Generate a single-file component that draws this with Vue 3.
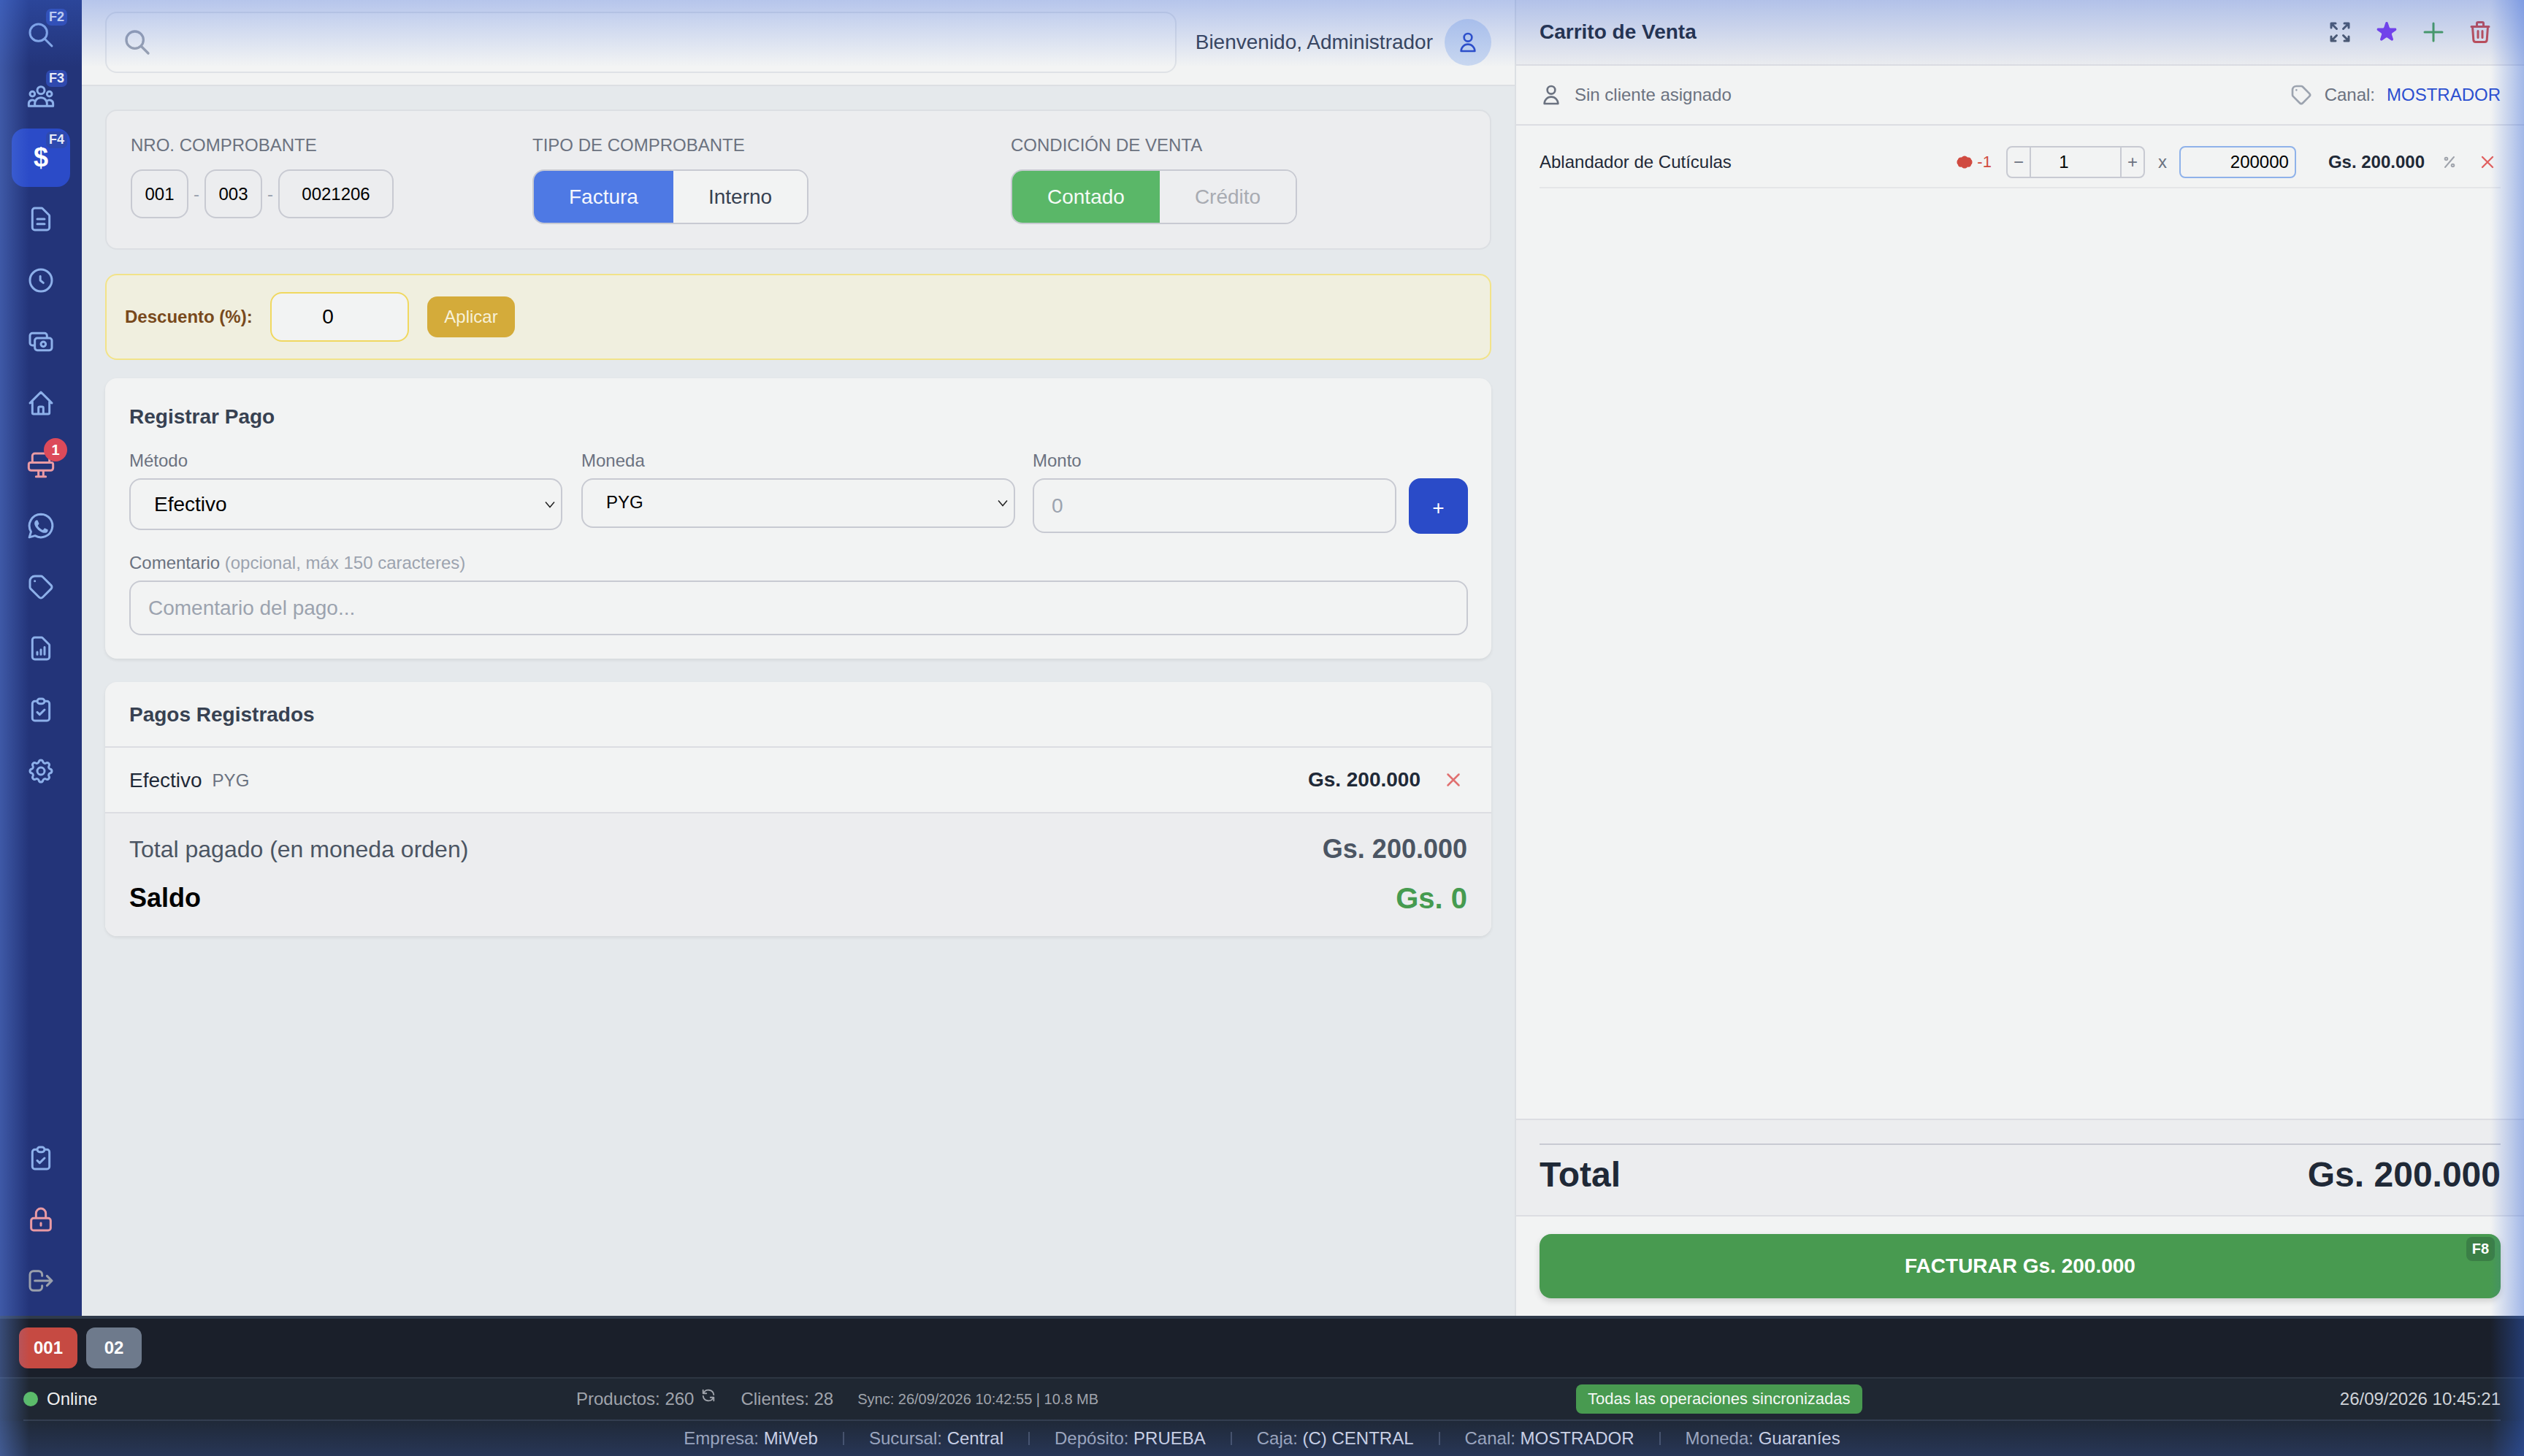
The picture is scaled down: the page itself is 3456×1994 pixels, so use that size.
<script setup>
const topItems = [
  { key: 'search', badge: 'F2', d: 'M21 21l-6-6m2-5a7 7 0 11-14 0 7 7 0 0114 0z' },
  { key: 'clients', badge: 'F3', d: 'M17 20h5v-2a3 3 0 00-5.356-1.857M17 20H7m10 0v-2c0-.656-.126-1.283-.356-1.857M7 20H2v-2a3 3 0 015.356-1.857M7 20v-2c0-.656.126-1.283.356-1.857m0 0a5.002 5.002 0 019.288 0M15 7a3 3 0 11-6 0 3 3 0 016 0zm6 3a2 2 0 11-4 0 2 2 0 014 0zM7 10a2 2 0 11-4 0 2 2 0 014 0z' },
  { key: 'sale', badge: 'F4', glyph: '$', active: true },
  { key: 'docs', d: 'M9 12h6m-6 4h6m2 5H7a2 2 0 01-2-2V5a2 2 0 012-2h5.586a1 1 0 01.707.293l5.414 5.414a1 1 0 01.293.707V19a2 2 0 01-2 2z' },
  { key: 'history', d: 'M11.5 8.5v3.5l2.5 2m7-2a9 9 0 11-18 0 9 9 0 0118 0z' },
  { key: 'cash', d: 'M17 9V7a2 2 0 00-2-2H5a2 2 0 00-2 2v6a2 2 0 002 2h2m2 4h10a2 2 0 002-2v-6a2 2 0 00-2-2H9a2 2 0 00-2 2v6a2 2 0 002 2zm7-5a2 2 0 11-4 0 2 2 0 014 0z' },
  { key: 'home', d: 'M3 12l2-2m0 0l7-7 7 7M5 10v10a1 1 0 001 1h3m10-11l2 2m-2-2v10a1 1 0 01-1 1h-3m-6 0a1 1 0 001-1v-4a1 1 0 011-1h2a1 1 0 011 1v4a1 1 0 001 1m-6 0h6' },
  { key: 'pos', tone: 'pink', count: '1', d: 'M5 10.5V5a2 2 0 012-2h10a2 2 0 012 2v5.500M3.500 10.500h17A1.500 1.500 0 0122 12v3a2 2 0 01-2 2H4a2 2 0 01-2-2v-3a1.500 1.500 0 011.500-1.500zM10 17.500v4M14 17.500v4M8 22h8' },
  { key: 'whatsapp', d: 'M12 2.500a9.500 9.500 0 00-8.100 14.400L2.500 21.500l4.700-1.300A9.500 9.500 0 1012 2.500z', fill: 'M8.600 7.400c-.3 0-.7.1-1 .5-.4.4-.9 1-.9 2.300s1 2.700 1.100 2.900c.1.2 1.900 3 4.700 4.100 2.300.9 2.800.7 3.300.7s1.600-.7 1.800-1.300c.2-.6.2-1.200.2-1.300-.1-.1-.3-.2-.5-.3l-1.900-.9c-.3-.1-.5-.2-.6.1l-.9 1.100c-.2.2-.3.2-.6.1-.3-.1-1.200-.4-2.200-1.400-.8-.7-1.400-1.600-1.500-1.900-.2-.3 0-.4.1-.6l.4-.5c.1-.2.2-.3.3-.5.1-.2 0-.4 0-.5l-.9-2c-.2-.5-.4-.5-.6-.5z' },
  { key: 'tags', d: 'M7 7h.01M7 3h5c.512 0 1.024.195 1.414.586l7 7a2 2 0 010 2.828l-7 7a2 2 0 01-2.828 0l-7-7A1.994 1.994 0 013 12V7a4 4 0 014-4z' },
  { key: 'reports', d: 'M9 17v-2m3 2v-4m3 4v-6m2 10H7a2 2 0 01-2-2V5a2 2 0 012-2h5.586a1 1 0 01.707.293l5.414 5.414a1 1 0 01.293.707V19a2 2 0 01-2 2z' },
  { key: 'tasks', d: 'M9 5H7a2 2 0 00-2 2v12a2 2 0 002 2h10a2 2 0 002-2V7a2 2 0 00-2-2h-2M9 5a2 2 0 002 2h2a2 2 0 002-2M9 5a2 2 0 012-2h2a2 2 0 012 2m-6 9l2 2 4-4' },
  { key: 'settings', d: 'M10.325 4.317c.426-1.756 2.924-1.756 3.35 0a1.724 1.724 0 002.573 1.066c1.543-.94 3.31.826 2.37 2.37a1.724 1.724 0 001.065 2.572c1.756.426 1.756 2.924 0 3.35a1.724 1.724 0 00-1.066 2.573c.94 1.543-.826 3.31-2.37 2.37a1.724 1.724 0 00-2.572 1.065c-.426 1.756-2.924 1.756-3.35 0a1.724 1.724 0 00-2.573-1.066c-1.543.94-3.31-.826-2.37-2.37a1.724 1.724 0 00-1.065-2.572c-1.756-.426-1.756-2.924 0-3.35a1.724 1.724 0 001.066-2.573c-.94-1.543.826-3.31 2.37-2.37.996.608 2.296.07 2.572-1.065zM15 12a3 3 0 11-6 0 3 3 0 016 0z' },
];

const bottomItems = [
  { key: 'tasks2', d: 'M9 5H7a2 2 0 00-2 2v12a2 2 0 002 2h10a2 2 0 002-2V7a2 2 0 00-2-2h-2M9 5a2 2 0 002 2h2a2 2 0 002-2M9 5a2 2 0 012-2h2a2 2 0 012 2m-6 9l2 2 4-4' },
  { key: 'lock', tone: 'pink', d: 'M12 15v2m-6 4h12a2 2 0 002-2v-6a2 2 0 00-2-2H6a2 2 0 00-2 2v6a2 2 0 002 2zm10-10V7a4 4 0 00-8 0v4h8z' },
  { key: 'logout', tone: 'grey', d: 'M17 16l4-4m0 0l-4-4m4 4H7m6 4v1a3 3 0 01-3 3H6a3 3 0 01-3-3V7a3 3 0 013-3h4a3 3 0 013 3v1' },
];

const userPath = 'M16 7a4 4 0 11-8 0 4 4 0 018 0zM12 14a7 7 0 00-7 7h14a7 7 0 00-7-7z';
const closePath = 'M6 18L18 6M6 6l12 12';

const infoItems = [
  { label: 'Empresa:', value: 'MiWeb' },
  { label: 'Sucursal:', value: 'Central' },
  { label: 'Depósito:', value: 'PRUEBA' },
  { label: 'Caja:', value: '(C) CENTRAL' },
  { label: 'Canal:', value: 'MOSTRADOR' },
  { label: 'Moneda:', value: 'Guaraníes' },
];
</script>

<template>
  <div class="page">
    <div class="workspace">
      <aside class="sidebar">
        <nav class="side-group">
          <div
            v-for="item in topItems"
            :key="item.key"
            class="side-item"
            :class="[item.tone, { active: item.active }]"
          >
            <span v-if="item.glyph" class="side-glyph">{{ item.glyph }}</span>
            <svg v-else class="side-icon" viewBox="0 0 24 24" fill="none" stroke="currentColor" stroke-width="1.8" stroke-linecap="round" stroke-linejoin="round">
              <path :d="item.d" />
              <path v-if="item.fill" :d="item.fill" fill="currentColor" stroke="none" />
            </svg>
            <span v-if="item.badge" class="side-badge">{{ item.badge }}</span>
            <span v-if="item.count" class="side-count">{{ item.count }}</span>
          </div>
        </nav>
        <nav class="side-group">
          <div v-for="item in bottomItems" :key="item.key" class="side-item" :class="item.tone">
            <svg class="side-icon" viewBox="0 0 24 24" fill="none" stroke="currentColor" stroke-width="1.8" stroke-linecap="round" stroke-linejoin="round">
              <path :d="item.d" />
            </svg>
          </div>
        </nav>
      </aside>

      <main class="main">
        <header class="topbar">
          <div class="searchbox">
            <svg class="search-icon" viewBox="0 0 24 24" fill="none" stroke="currentColor" stroke-width="2" stroke-linecap="round" stroke-linejoin="round">
              <path d="M21 21l-6-6m2-5a7 7 0 11-14 0 7 7 0 0114 0z" />
            </svg>
            <input class="search-input" type="text" />
          </div>
          <span class="welcome">Bienvenido, Administrador</span>
          <div class="avatar">
            <svg viewBox="0 0 24 24" fill="none" stroke="currentColor" stroke-width="2" stroke-linecap="round" stroke-linejoin="round">
              <path :d="userPath" />
            </svg>
          </div>
        </header>

        <div class="content">
          <section class="card-voucher">
            <div>
              <div class="voucher-label">NRO. COMPROBANTE</div>
              <div class="voucher-number">
                <input class="num-input w-short" value="001" />
                <span class="num-dash">-</span>
                <input class="num-input w-short" value="003" />
                <span class="num-dash">-</span>
                <input class="num-input w-long" value="0021206" />
              </div>
            </div>
            <div>
              <div class="voucher-label">TIPO DE COMPROBANTE</div>
              <div class="segment">
                <button class="seg-btn seg-blue">Factura</button>
                <button class="seg-btn seg-plain">Interno</button>
              </div>
            </div>
            <div>
              <div class="voucher-label">CONDICIÓN DE VENTA</div>
              <div class="segment">
                <button class="seg-btn seg-green">Contado</button>
                <button class="seg-btn seg-muted">Crédito</button>
              </div>
            </div>
          </section>

          <section class="card-discount">
            <label class="discount-label">Descuento (%):</label>
            <input class="discount-input" value="0" />
            <button class="discount-btn">Aplicar</button>
          </section>

          <section class="card-pay">
            <h3 class="card-title">Registrar Pago</h3>
            <div class="pay-row">
              <div class="col-method">
                <label class="field-label">Método</label>
                <div class="select-wrap tall">
                  <select class="select select-big"><option>Efectivo</option></select>
                  <svg class="chevron" viewBox="0 0 14 10" fill="none" stroke="#222" stroke-width="1.5"><path d="M1 1.500l6 7 6-7" /></svg>
                </div>
              </div>
              <div class="col-currency">
                <label class="field-label">Moneda</label>
                <div class="select-wrap">
                  <select class="select select-small"><option>PYG</option></select>
                  <svg class="chevron" viewBox="0 0 14 10" fill="none" stroke="#222" stroke-width="1.5"><path d="M1 1.500l6 7 6-7" /></svg>
                </div>
              </div>
              <div class="col-amount">
                <label class="field-label">Monto</label>
                <input class="text-field" placeholder="0" />
              </div>
              <button class="add-btn">+</button>
            </div>
            <label class="field-label comment-label">Comentario <span class="hint">(opcional, máx 150 caracteres)</span></label>
            <input class="text-field comment-field" placeholder="Comentario del pago..." />
          </section>

          <section class="card-list">
            <h3 class="list-title">Pagos Registrados</h3>
            <div class="list-row">
              <span class="row-method">Efectivo</span>
              <span class="row-currency">PYG</span>
              <span class="row-amount">Gs. 200.000</span>
              <svg class="row-close" viewBox="0 0 24 24" fill="none" stroke="currentColor" stroke-width="2" stroke-linecap="round">
                <path :d="closePath" />
              </svg>
            </div>
            <div class="list-footer">
              <div class="sum-row">
                <span class="sum-label">Total pagado (en moneda orden)</span>
                <span class="sum-value">Gs. 200.000</span>
              </div>
              <div class="sum-row balance-row">
                <span class="balance-label">Saldo</span>
                <span class="balance-value">Gs. 0</span>
              </div>
            </div>
          </section>
        </div>
      </main>

      <aside class="cart">
        <header class="cart-head">
          <h2 class="cart-title">Carrito de Venta</h2>
          <div class="cart-tools">
            <svg class="tool tool-grey" viewBox="0 0 24 24" fill="none" stroke="currentColor" stroke-width="2" stroke-linecap="round" stroke-linejoin="round">
              <path d="M4 8V4m0 0h4M4 4l5 5m11-1V4m0 0h-4m4 0l-5 5M4 16v4m0 0h4m-4 0l5-5m11 1v4m0 0h-4m4 0l-5-5" />
            </svg>
            <svg class="tool tool-purple" viewBox="0 0 20 20" fill="currentColor">
              <path d="M9.049 2.927c.3-.921 1.603-.921 1.902 0l1.070 3.292a1 1 0 00.950.690h3.462c.969 0 1.371 1.240.588 1.810l-2.800 2.034a1 1 0 00-.364 1.118l1.070 3.292c.3.921-.755 1.688-1.540 1.118l-2.800-2.034a1 1 0 00-1.175 0l-2.800 2.034c-.784.570-1.838-.197-1.539-1.118l1.070-3.292a1 1 0 00-.364-1.118L2.980 8.720c-.783-.570-.380-1.810.588-1.810h3.461a1 1 0 00.951-.690l1.070-3.292z" />
            </svg>
            <svg class="tool tool-green" viewBox="0 0 24 24" fill="none" stroke="currentColor" stroke-width="2" stroke-linecap="round">
              <path d="M12 4v16m8-8H4" />
            </svg>
            <svg class="tool tool-red" viewBox="0 0 24 24" fill="none" stroke="currentColor" stroke-width="2" stroke-linecap="round" stroke-linejoin="round">
              <path d="M19 7l-.867 12.142A2 2 0 0116.138 21H7.862a2 2 0 01-1.995-1.858L5 7m5 4v6m4-6v6m1-10V4a1 1 0 00-1-1h-4a1 1 0 00-1 1v3M4 7h16" />
            </svg>
          </div>
        </header>

        <div class="cart-client">
          <svg class="client-icon" viewBox="0 0 24 24" fill="none" stroke="currentColor" stroke-width="2" stroke-linecap="round" stroke-linejoin="round">
            <path :d="userPath" />
          </svg>
          <span class="client-name">Sin cliente asignado</span>
          <svg class="client-icon tag-icon" viewBox="0 0 24 24" fill="none" stroke="currentColor" stroke-width="2" stroke-linecap="round" stroke-linejoin="round">
            <path d="M7 7h.01M7 3h5c.512 0 1.024.195 1.414.586l7 7a2 2 0 010 2.828l-7 7a2 2 0 01-2.828 0l-7-7A1.994 1.994 0 013 12V7a4 4 0 014-4z" />
          </svg>
          <span class="channel">Canal:</span>
          <span class="channel-value">MOSTRADOR</span>
        </div>

        <div class="cart-list">
          <div class="cart-item">
            <span class="item-name">Ablandador de Cutículas</span>
            <svg class="stock-icon" viewBox="0 0 24 18" fill="currentColor" preserveAspectRatio="none">
              <path d="M12 .5c2 0 3 1 4 2 3-.5 5 1 5 3 2 1 2 6 0 7 0 2-2 4-5 3-1 1.500-2 2-4 2s-3-.5-4-2c-3 1-5-1-5-3-2-1-2-6 0-7 0-2 2-3.500 5-3 1-1 2-2 4-2z" />
            </svg>
            <span class="stock-count">-1</span>
            <div class="qty">
              <span class="qty-btn qty-minus">−</span>
              <input class="qty-input" value="1" />
              <span class="qty-btn qty-plus">+</span>
            </div>
            <span class="times">x</span>
            <input class="price-input" value="200000" />
            <span class="item-amount">Gs. 200.000</span>
            <svg class="item-percent" viewBox="0 0 24 24" fill="none" stroke="currentColor" stroke-width="2" stroke-linecap="round">
              <path d="M18 5L6 19" />
              <circle cx="7.500" cy="7.500" r="1.800" />
              <circle cx="16.500" cy="16.500" r="1.800" />
            </svg>
            <svg class="item-close" viewBox="0 0 24 24" fill="none" stroke="currentColor" stroke-width="2" stroke-linecap="round">
              <path :d="closePath" />
            </svg>
          </div>
        </div>

        <div class="cart-total">
          <div class="total-inner">
            <span>Total</span>
            <span>Gs. 200.000</span>
          </div>
        </div>
        <div class="cart-action">
          <button class="invoice-btn">
            FACTURAR Gs. 200.000
            <span class="invoice-key">F8</span>
          </button>
        </div>
      </aside>
    </div>

    <footer class="statusbar">
      <div class="tabs">
        <span class="tab tab-red">001</span>
        <span class="tab tab-grey">02</span>
      </div>
      <div class="status-row">
        <div class="online"><span class="online-dot"></span>Online</div>
        <div class="counts">
          <span>Productos: 260</span>
          <svg class="refresh" viewBox="0 0 24 24" fill="none" stroke="currentColor" stroke-width="2" stroke-linecap="round" stroke-linejoin="round">
            <path d="M4 4v5h.582m15.356 2A8.001 8.001 0 004.582 9m0 0H9m11 11v-5h-.581m0 0a8.003 8.003 0 01-15.357-2m15.357 2H15" />
          </svg>
          <span class="count-clients">Clientes: 28</span>
          <span class="sync">Sync: 26/09/2026 10:42:55 | 10.8 MB</span>
        </div>
        <div class="status-right">
          <span class="sync-pill">Todas las operaciones sincronizadas</span>
          <span class="clock">26/09/2026 10:45:21</span>
        </div>
      </div>
      <div class="info-row">
        <template v-for="(item, index) in infoItems" :key="item.label">
          <span v-if="index" class="info-sep"></span>
          <span class="info-item">{{ item.label }} <span class="info-value">{{ item.value }}</span></span>
        </template>
      </div>
    </footer>

    <div class="glow"></div>
  </div>
</template>

<style scoped>
.page {
  position: relative;
  display: flex;
  flex-direction: column;
  width: 3456px;
  height: 1994px;
  overflow: hidden;
  font-family: "Liberation Sans", Arial, sans-serif;
  font-size: 24px;
  color: #1f2937;
  background: #e5e9ec;
}

.glow {
  position: absolute;
  inset: 0;
  pointer-events: none;
  background:
    linear-gradient(to bottom, rgba(60, 105, 220, 0.33), rgba(60, 105, 220, 0) 92px),
    linear-gradient(to right, rgba(100, 140, 230, 0.42), rgba(100, 140, 230, 0) 40px),
    linear-gradient(to left, rgba(49, 100, 217, 0.41), rgba(49, 100, 217, 0) 46px),
    linear-gradient(to top, rgba(70, 105, 200, 0.22), rgba(70, 105, 200, 0) 52px);
}

.workspace {
  display: flex;
  height: 1802px;
  flex: none;
}

/* sidebar */
.sidebar {
  width: 112px;
  flex: none;
  display: flex;
  flex-direction: column;
  justify-content: space-between;
  padding: 8px 0;
  box-sizing: border-box;
  background: #233479;
}

.side-group {
  display: flex;
  flex-direction: column;
  gap: 4px;
}

.side-item {
  position: relative;
  width: 80px;
  height: 80px;
  margin: 0 16px;
  border-radius: 18px;
  display: flex;
  align-items: center;
  justify-content: center;
  color: #8db0ea;
}

.side-item.pink {
  color: #e99aa4;
}

.side-item.grey {
  color: #9aa0ac;
}

.side-item.active {
  background: #2b4bc8;
  color: #fff;
}

.side-icon {
  width: 40px;
  height: 40px;
}

.side-glyph {
  font-size: 36px;
  font-weight: 700;
  line-height: 1;
}

.side-badge {
  position: absolute;
  top: 4px;
  right: 4px;
  width: 29px;
  height: 23px;
  border-radius: 7px;
  background: #2f4aaf;
  color: #e8ecf8;
  font-size: 18px;
  font-weight: 700;
  line-height: 23px;
  text-align: center;
}

.side-count {
  position: absolute;
  top: 4px;
  right: 4px;
  width: 32px;
  height: 32px;
  border-radius: 50%;
  background: #dc4a5a;
  color: #fff;
  font-size: 20px;
  font-weight: 700;
  line-height: 32px;
  text-align: center;
}

/* main column */
.main {
  flex: 1;
  min-width: 0;
  display: flex;
  flex-direction: column;
  background: #e5e9ec;
}

.topbar {
  height: 116px;
  flex: none;
  display: flex;
  align-items: center;
  padding: 0 32px;
  background: #f2f3f3;
  border-bottom: 2px solid #dcdfe3;
}

.searchbox {
  flex: 1;
  height: 84px;
  box-sizing: border-box;
  display: flex;
  align-items: center;
  padding-left: 22px;
  background: #f3f4f4;
  border: 2px solid #dfe2e6;
  border-radius: 16px;
}

.search-icon {
  width: 40px;
  height: 40px;
  flex: none;
  color: #9ca3af;
}

.search-input {
  flex: 1;
  border: 0;
  outline: 0;
  background: transparent;
}

.welcome {
  margin-left: 26px;
  font-size: 28px;
  color: #374151;
}

.avatar {
  width: 64px;
  height: 64px;
  margin-left: 16px;
  flex: none;
  border-radius: 50%;
  background: #c9d8f0;
  color: #2b4cc8;
  display: flex;
  align-items: center;
  justify-content: center;
}

.avatar svg {
  width: 32px;
  height: 32px;
}

.content {
  padding: 32px 32px 0;
}

/* voucher card */
.card-voucher {
  height: 192px;
  box-sizing: border-box;
  display: grid;
  grid-template-columns: 550px 655px 1fr;
  padding: 33px 33px 0;
  margin-bottom: 33px;
  background: #ecedef;
  border: 2px solid #dcdfe3;
  border-radius: 16px;
}

.voucher-label {
  height: 28px;
  line-height: 28px;
  margin-bottom: 19px;
  color: #6b7280;
}

.voucher-number {
  display: flex;
  align-items: center;
}

.num-input {
  height: 67px;
  box-sizing: border-box;
  padding: 0;
  border: 2px solid #c8cad2;
  border-radius: 16px;
  background: transparent;
  font: inherit;
  color: #000;
  text-align: center;
  outline: 0;
}

.w-short {
  width: 79px;
}

.w-long {
  width: 158px;
}

.num-dash {
  width: 22px;
  text-align: center;
  color: #9ca3af;
}

.segment {
  display: inline-flex;
  height: 75px;
  box-sizing: border-box;
  border: 2px solid #c8cad2;
  border-radius: 16px;
  overflow: hidden;
}

.seg-btn {
  padding: 0 48px;
  border: 0;
  font-family: inherit;
  font-size: 28px;
}

.seg-blue {
  background: #4e79e4;
  color: #f5f7fd;
}

.seg-plain {
  background: #f2f3f3;
  color: #374151;
}

.seg-green {
  background: #5ab768;
  color: #f5fbf6;
}

.seg-muted {
  background: #edeef0;
  color: #a8abb2;
}

/* discount */
.card-discount {
  height: 118px;
  box-sizing: border-box;
  display: flex;
  align-items: center;
  padding-left: 25px;
  margin-bottom: 25px;
  background: #f0efdf;
  border: 2px solid #f2e389;
  border-radius: 16px;
}

.discount-label {
  width: 199px;
  font-weight: 700;
  font-size: 24px;
  color: #78491c;
}

.discount-input {
  width: 190px;
  height: 68px;
  box-sizing: border-box;
  padding: 0 32px 0 0;
  border: 2px solid #f0d860;
  border-radius: 16px;
  background: #f2f3f3;
  font-family: inherit;
  font-size: 28px;
  color: #000;
  text-align: center;
  outline: 0;
}

.discount-btn {
  width: 120px;
  height: 56px;
  margin-left: 25px;
  border: 0;
  border-radius: 14px;
  background: #d4ab3a;
  color: #f7f1d8;
  font-family: inherit;
  font-size: 24px;
}

/* payment form */
.card-pay {
  height: 384px;
  box-sizing: border-box;
  padding: 37px 32px 0 33px;
  margin-bottom: 32px;
  background: #f2f3f3;
  border-radius: 16px;
  box-shadow: 0 2px 4px rgba(0, 0, 0, 0.08);
}

.card-title {
  margin: 0 0 30px;
  font-size: 28px;
  line-height: 32px;
  font-weight: 700;
  color: #374151;
}

.pay-row {
  display: flex;
  align-items: flex-end;
  height: 114px;
}

.pay-row > div {
  align-self: flex-start;
}

.col-method {
  width: 593px;
  margin-right: 26px;
}

.col-currency {
  width: 594px;
  margin-right: 24px;
}

.col-amount {
  width: 498px;
  margin-right: 17px;
}

.field-label {
  display: block;
  height: 28px;
  line-height: 28px;
  margin-bottom: 10px;
  color: #6b7280;
}

.hint {
  color: #9ca3af;
}

.select-wrap {
  position: relative;
  height: 68px;
}

.select-wrap.tall {
  height: 71px;
}

.select {
  width: 100%;
  height: 100%;
  box-sizing: border-box;
  appearance: none;
  border: 2px solid #c8cad2;
  border-radius: 16px;
  background: #f2f3f3;
  font-family: inherit;
  color: #000;
  outline: 0;
}

.select-big {
  padding-left: 32px;
  font-size: 28px;
}

.select-small {
  padding-left: 32px;
  padding-bottom: 3px;
  font-size: 24px;
}

.chevron {
  position: absolute;
  right: 10px;
  top: 50%;
  width: 14px;
  height: 10px;
  margin-top: -5px;
}

.text-field {
  display: block;
  width: 100%;
  height: 75px;
  box-sizing: border-box;
  padding: 0 24px;
  border: 2px solid #c8cad2;
  border-radius: 16px;
  background: #f2f3f3;
  font-family: inherit;
  font-size: 28px;
  color: #000;
  outline: 0;
}

.text-field::placeholder {
  color: #9ca3af;
  opacity: 1;
}

.add-btn {
  width: 81px;
  height: 76px;
  flex: none;
  border: 0;
  border-radius: 16px;
  background: #2a4bc8;
  color: #fff;
  font-family: inherit;
  font-size: 28px;
  padding-top: 6px;
}

.comment-label {
  margin-top: 26px;
}

.comment-field {
  width: 1833px;
}

/* registered payments */
.card-list {
  height: 348px;
  background: #f2f3f3;
  border-radius: 16px;
  overflow: hidden;
  box-shadow: 0 2px 4px rgba(0, 0, 0, 0.08);
}

.list-title {
  height: 88px;
  margin: 0;
  padding-left: 33px;
  line-height: 90px;
  font-size: 28px;
  font-weight: 700;
  color: #374151;
  border-bottom: 2px solid #dcdde2;
}

.list-row {
  height: 88px;
  display: flex;
  align-items: center;
  padding: 0 37px 0 33px;
  border-bottom: 2px solid #dcdde2;
}

.row-method {
  font-size: 28px;
  color: #1f2937;
  padding-top: 2px;
}

.row-currency {
  margin-left: 14px;
  padding-top: 2px;
  color: #6b7280;
}

.row-amount {
  margin-left: auto;
  font-size: 28px;
  font-weight: 700;
  color: #1f2937;
}

.row-close {
  width: 30px;
  height: 30px;
  margin-left: 30px;
  color: #e07070;
}

.list-footer {
  padding: 30px 33px 0;
  height: 168px;
  box-sizing: border-box;
  background: #ecedef;
}

.sum-row {
  display: flex;
  justify-content: space-between;
  align-items: center;
  height: 38px;
}

.sum-label {
  font-size: 32px;
  color: #4b5563;
}

.sum-value {
  font-size: 36px;
  font-weight: 700;
  color: #4b5563;
}

.balance-row {
  height: 46px;
  margin-top: 25px;
}

.balance-label {
  font-size: 36px;
  font-weight: 700;
  color: #000;
}

.balance-value {
  font-size: 40px;
  font-weight: 700;
  color: #469b50;
}

/* cart */
.cart {
  width: 1382px;
  flex: none;
  box-sizing: border-box;
  display: flex;
  flex-direction: column;
  background: #f2f3f3;
  border-left: 2px solid #dcdfe3;
}

.cart-head {
  height: 90px;
  flex: none;
  box-sizing: border-box;
  display: flex;
  align-items: center;
  justify-content: space-between;
  padding: 0 32px;
  background: #ecedef;
  border-bottom: 2px solid #dcdde2;
}

.cart-title {
  margin: 0;
  font-size: 28px;
  font-weight: 700;
  color: #1f2937;
}

.cart-tools {
  display: flex;
  align-items: center;
  gap: 28px;
  margin-right: 10px;
}

.tool {
  width: 36px;
  height: 36px;
}

.tool-grey {
  color: #4b5563;
}

.tool-purple {
  color: #7c3aed;
}

.tool-green {
  color: #48a055;
}

.tool-red {
  color: #c94a4a;
}

.cart-client {
  height: 82px;
  flex: none;
  box-sizing: border-box;
  display: flex;
  align-items: center;
  padding: 0 32px;
  border-bottom: 2px solid #dcdde2;
  color: #6b7280;
}

.client-icon {
  width: 32px;
  height: 32px;
  flex: none;
}

.tag-icon {
  margin-left: auto;
  color: #9ca3af;
}

.client-name {
  margin-left: 16px;
}

.channel {
  margin-left: 16px;
}

.channel-value {
  margin-left: 16px;
  color: #2b4fd0;
}

.cart-list {
  flex: 1;
}

.cart-item {
  height: 86px;
  box-sizing: border-box;
  padding-top: 16px;
  margin: 0 32px;
  display: flex;
  align-items: center;
  border-bottom: 2px solid #e5e6e8;
}

.item-name {
  flex: 1;
  color: #1f2937;
}

.stock-icon {
  width: 24px;
  height: 18px;
  color: #d04a40;
}

.stock-count {
  margin-left: 5px;
  font-size: 22px;
  color: #d04a40;
}

.qty {
  display: flex;
  width: 190px;
  height: 44px;
  box-sizing: border-box;
  margin-left: 20px;
  border: 2px solid #c8cad2;
  border-radius: 8px;
  overflow: hidden;
}

.qty-btn {
  width: 30px;
  flex: none;
  text-align: center;
  line-height: 40px;
  color: #6b7280;
}

.qty-minus {
  border-right: 2px solid #c8cad2;
}

.qty-plus {
  border-left: 2px solid #c8cad2;
}

.qty-input {
  flex: 1;
  min-width: 0;
  padding: 0 32px 0 0;
  border: 0;
  outline: 0;
  background: transparent;
  font: inherit;
  color: #000;
  text-align: center;
}

.times {
  width: 12px;
  margin-left: 18px;
  text-align: center;
  color: #6b7280;
}

.price-input {
  width: 160px;
  height: 44px;
  box-sizing: border-box;
  margin-left: 17px;
  padding: 0 8px 0 0;
  border: 2px solid #8fb2ea;
  border-radius: 8px;
  outline: 0;
  background: transparent;
  font: inherit;
  color: #000;
  text-align: right;
}

.item-amount {
  margin-left: 44px;
  font-weight: 700;
  color: #1f2937;
}

.item-percent {
  width: 24px;
  height: 24px;
  margin-left: 22px;
  color: #a0a4ac;
}

.item-close {
  width: 28px;
  height: 28px;
  margin-left: 26px;
  margin-right: 4px;
  color: #e06060;
}

.cart-total {
  height: 134px;
  flex: none;
  box-sizing: border-box;
  padding: 32px 32px 0;
  background: #ecedef;
  border-top: 2px solid #dcdde2;
  border-bottom: 2px solid #dcdde2;
}

.total-inner {
  display: flex;
  justify-content: space-between;
  align-items: center;
  height: 80px;
  border-top: 2px solid #c8cad2;
  font-size: 48px;
  font-weight: 700;
  color: #1f2937;
}

.cart-action {
  flex: none;
  height: 136px;
  box-sizing: border-box;
  padding: 24px 32px 0;
}

.invoice-btn {
  position: relative;
  width: 100%;
  height: 88px;
  border: 0;
  border-radius: 16px;
  background: #489a50;
  color: #fff;
  font-family: inherit;
  font-size: 28px;
  font-weight: 700;
  box-shadow: 0 4px 8px rgba(0, 0, 0, 0.15);
}

.invoice-key {
  position: absolute;
  top: 4px;
  right: 8px;
  width: 39px;
  height: 33px;
  border-radius: 8px;
  background: #3b7f46;
  font-size: 20px;
  line-height: 33px;
}

/* status bar */
.statusbar {
  flex: 1;
  display: flex;
  flex-direction: column;
  background: #1f2732;
  border-top: 4px solid #2f3a4a;
}

.tabs {
  height: 82px;
  flex: none;
  box-sizing: border-box;
  display: flex;
  gap: 12px;
  padding: 12px 0 0 26px;
  background: #1a1f2a;
  border-bottom: 2px solid #2d3541;
}

.tab {
  height: 56px;
  border-radius: 12px;
  color: #fff;
  font-weight: 700;
  line-height: 56px;
  text-align: center;
}

.tab-red {
  width: 80px;
  background: #c64a42;
}

.tab-grey {
  width: 76px;
  background: #6e7a8c;
}

.status-row {
  height: 58px;
  flex: none;
  box-sizing: border-box;
  margin: 0 32px;
  display: grid;
  grid-template-columns: 757px 1369px 1fr;
  align-items: center;
  border-bottom: 2px solid #333d4e;
}

.online {
  display: flex;
  align-items: center;
  gap: 12px;
  color: #f0f0f0;
}

.online-dot {
  width: 20px;
  height: 20px;
  border-radius: 50%;
  background: #5bbc6a;
}

.counts {
  display: flex;
  align-items: center;
  color: #a0a4ac;
}

.refresh {
  width: 22px;
  height: 22px;
  margin: -10px 0 0 9px;
}

.count-clients {
  margin-left: 33px;
}

.sync {
  margin-left: 33px;
  font-size: 20px;
}

.status-right {
  display: flex;
  align-items: center;
  justify-content: space-between;
}

.sync-pill {
  height: 40px;
  padding: 0 16px;
  border-radius: 8px;
  background: #489a50;
  color: #f4f8f4;
  font-size: 22px;
  line-height: 40px;
}

.clock {
  color: #cfd3d8;
}

.info-row {
  flex: 1;
  display: flex;
  align-items: center;
  justify-content: center;
  background: #1f2836;
}

.info-item {
  color: #a5adbd;
}

.info-value {
  color: #d8dce8;
}

.info-sep {
  width: 2px;
  height: 18px;
  margin: 0 34px;
  background: #465063;
}
</style>

<style>
html,
body {
  margin: 0;
  overflow: hidden;
}
</style>
